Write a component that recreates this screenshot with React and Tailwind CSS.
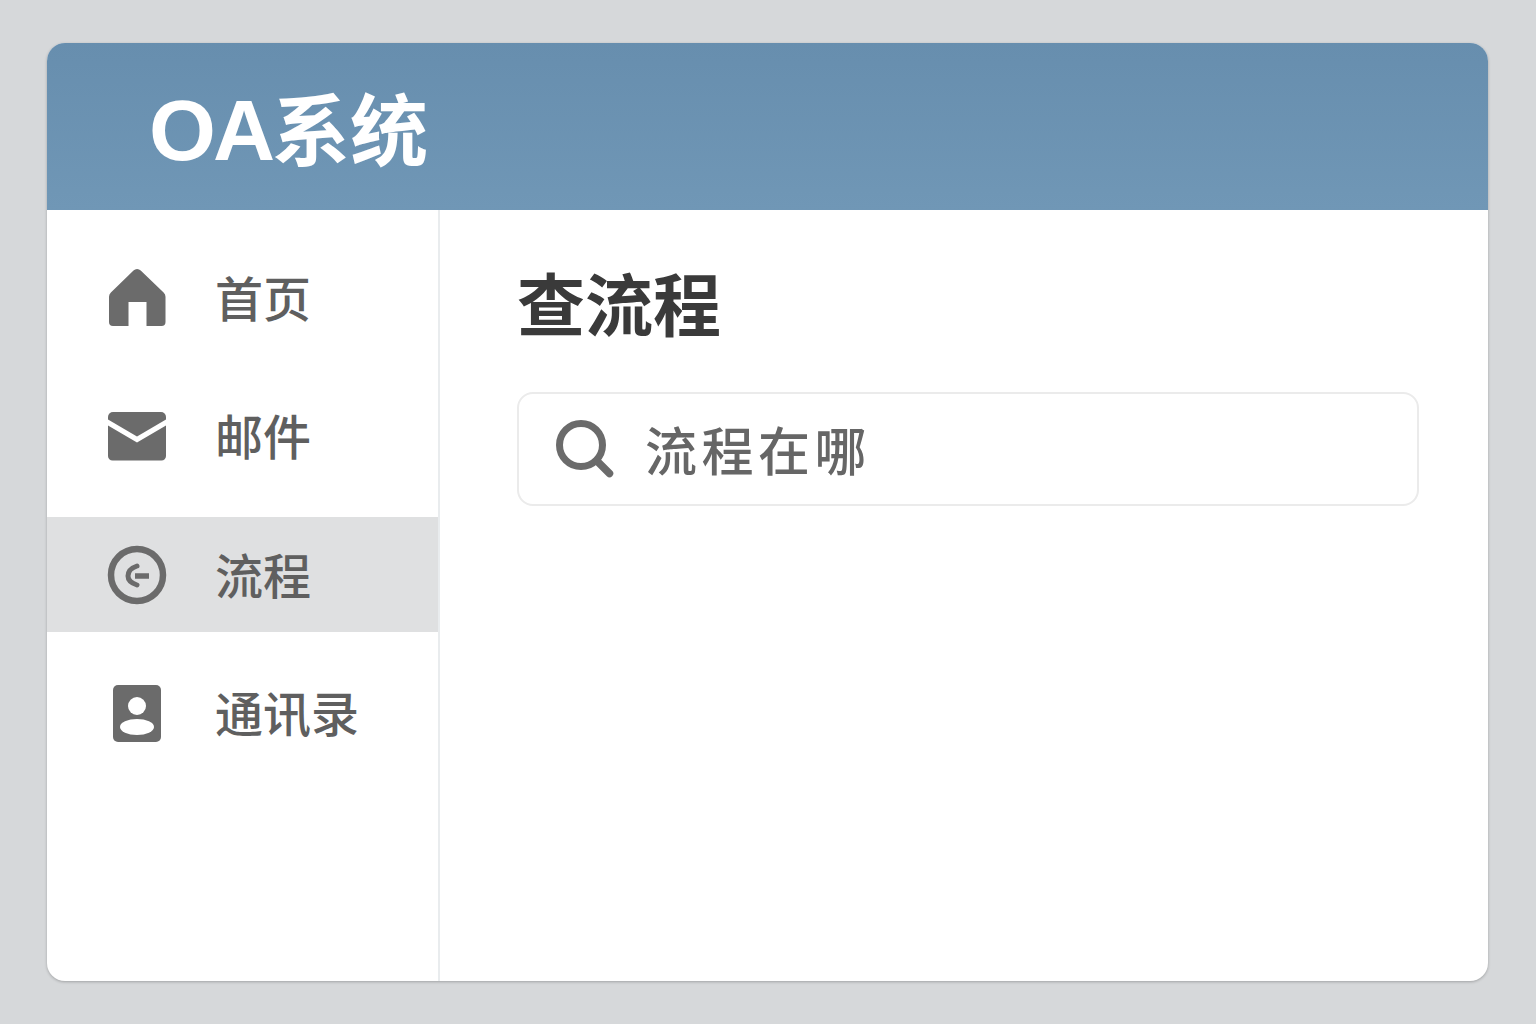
import React from "react";

const HomeIcon = () => (
  <svg width="57" height="57" viewBox="0 0 57 57" fill="#6b6b6b">
    <path d="M24.5 1.6a5 5 0 0 1 7.2 0L54.6 23.4a6 6 0 0 1 1.9 4.4V53a4 4 0 0 1-4 4H37.5V33h-18v24H4a4 4 0 0 1-4-4V27.8a6 6 0 0 1 1.9-4.4z" />
  </svg>
);

const MailIcon = () => (
  <svg width="58" height="49" viewBox="0 0 58 49" fill="#6b6b6b">
    <path d="M5 0h48a5 5 0 0 1 5 5v2.500L29 24.500 0 7.500V5a5 5 0 0 1 5-5z" />
    <path d="M0 13.500 29 30.500 58 13.500V44a4.500 4.500 0 0 1-4.500 4.500h-49A4.500 4.500 0 0 1 0 44z" />
  </svg>
);

const FlowIcon = () => (
  <svg width="60" height="60" viewBox="0 0 60 60" fill="none" stroke="#6b6b6b">
    <circle cx="30" cy="30" r="26" strokeWidth="6.500" />
    <path d="M30 21Q21 24 21 31Q21 37 30 40" strokeWidth="5" strokeLinecap="round" />
    <path d="M28 31h14" strokeWidth="5.500" />
  </svg>
);

const ContactIcon = () => (
  <svg width="48" height="57" viewBox="0 0 48 57">
    <rect width="48" height="57" rx="5" fill="#6b6b6b" />
    <circle cx="24" cy="21" r="9" fill="#fff" />
    <ellipse cx="24" cy="42" rx="17" ry="8" fill="#fff" />
  </svg>
);

const SearchIcon = () => (
  <svg width="58" height="58" viewBox="0 0 58 58" fill="none" stroke="#6b6b6b" strokeLinecap="round">
    <circle cx="25" cy="25" r="21.500" strokeWidth="7" />
    <path d="M41 41l12.500 12.500" strokeWidth="7.500" />
  </svg>
);

const navItems = [
  { label: "首页", icon: <HomeIcon /> },
  { label: "邮件", icon: <MailIcon /> },
  { label: "流程", icon: <FlowIcon />, active: true },
  { label: "通讯录", icon: <ContactIcon /> },
];

export default function App() {
  return (
    <div className="h-screen overflow-hidden bg-[#d6d8da] pt-[43px] pl-[47px] font-['Inter','Noto_Sans_CJK_SC',sans-serif]">
      <div className="flex h-[938px] w-[1441px] flex-col overflow-hidden rounded-[18px] bg-white shadow-[0_1px_3px_rgba(0,0,0,0.25)]">
        <header className="flex h-[167px] shrink-0 items-center bg-gradient-to-b from-[#678eae] to-[#7097b6] pl-[102px]">
          <h1 className="mt-[6px] text-[78px] leading-none font-bold text-white">
            <span className="font-['Liberation_Sans'] text-[86px] tracking-[-3px]">OA</span>系统
          </h1>
        </header>

        <div className="flex min-h-0 flex-1">
          <nav className="flex w-[393px] shrink-0 flex-col gap-[23.500px] border-r-2 border-[#e9ecee] pt-[30px]">
            {navItems.map((item) => (
              <div
                key={item.label}
                className={`flex h-[115px] items-center ${item.active ? "bg-[#dfe0e1]" : ""}`}
              >
                <div className="ml-[60px] flex w-[60px] justify-center">{item.icon}</div>
                <span className="mt-[4px] ml-[48px] text-[48px] leading-none font-medium text-[#5f5f5f]">{item.label}</span>
              </div>
            ))}
          </nav>

          <main className="flex-1 pt-[54px] pr-[69px] pl-[77px]">
            <h2 className="text-[68px] leading-[84px] font-bold text-[#3a3a3a]">查流程</h2>
            <div className="mt-[44px] flex h-[114px] items-center rounded-[16px] border-2 border-[#ebebeb] pl-[37px]">
              <SearchIcon />
              <span className="mt-[8px] ml-[31px] text-[52px] leading-none font-medium tracking-[4.500px] text-[#666666]">流程在哪</span>
            </div>
          </main>
        </div>
      </div>
    </div>
  );
}
